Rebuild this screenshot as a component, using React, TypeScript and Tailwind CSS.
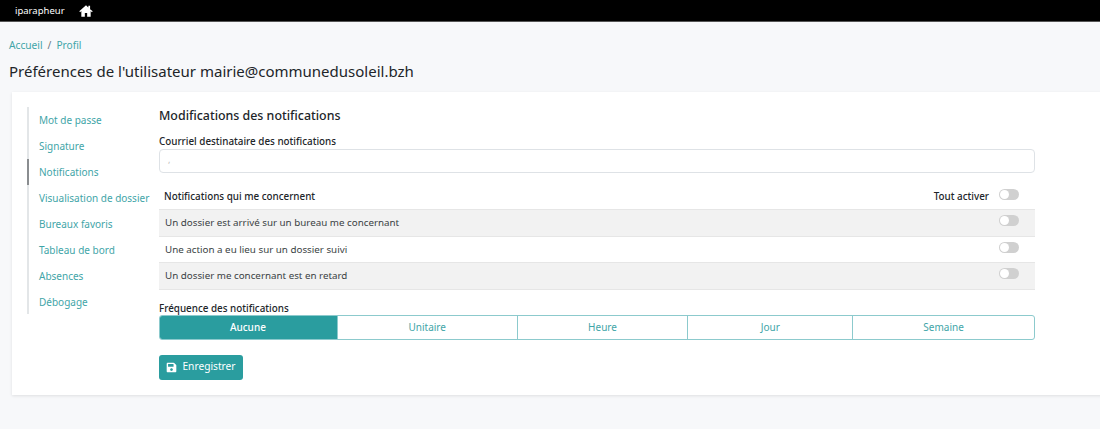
import { FaSave } from "react-icons/fa";

const font = { fontFamily: '"Noto Sans", sans-serif' };

const nav = ["Mot de passe", "Signature", "Notifications", "Visualisation de dossier", "Bureaux favoris", "Tableau de bord", "Absences", "Débogage"];
const rows = [
  { t: "Un dossier est arrivé sur un bureau me concernant", g: true },
  { t: "Une action a eu lieu sur un dossier suivi", g: false },
  { t: "Un dossier me concernant est en retard", g: true },
];
const segs = [
  { t: "Aucune", w: "w-[178px]", on: true },
  { t: "Unitaire", w: "w-[180px]", on: false },
  { t: "Heure", w: "w-[171px]", on: false },
  { t: "Jour", w: "w-[165px]", on: false },
  { t: "Semaine", w: "w-[182px]", on: false },
];

function Toggle() {
  return (
    <span className="flex h-[11px] w-[20px] items-center rounded-full bg-[#d0d0d0] pl-px">
      <span className="h-[9px] w-[9px] rounded-full bg-white" />
    </span>
  );
}

export default function App() {
  return (
    <div style={font} className="flex h-[429px] w-[1100px] flex-col overflow-hidden bg-[#f7f8fa] text-[#212529]">
      <header className="flex h-[22px] shrink-0 items-center border-b border-[#555] bg-black pl-[15px] text-white">
        <span className="text-[9.5px] leading-none">iparapheur</span>
        <svg viewBox="0 0 24 24" className="ml-[14px] h-[14px] w-[14px]" fill="currentColor">
          <path d="M12 2 0.5 12.5 2 14l2-1.8V22h6v-6.5h4V22h6v-9.8l2 1.8 1.5-1.5L19 9V3h-3v3.2z" />
        </svg>
      </header>
      <div className="flex h-[70px] shrink-0 flex-col pl-[9px]">
        <nav className="mt-[15px] flex h-[17px] items-center text-[10.2px] text-[#3fa5a8]">
          <span>Accueil</span>
          <span className="mx-[5px] text-[#6c757d]">/</span>
          <span>Profil</span>
        </nav>
        <h1 className="mt-[6px] text-[15px] leading-[22px] font-normal whitespace-nowrap text-[#212529]">
          Préférences de l'utilisateur mairie@communedusoleil.bzh
        </h1>
      </div>
      <main className="ml-3 flex h-[303px] w-[1100px] shrink-0 bg-white pt-[15px] pl-[15px] shadow-[0_1px_3px_rgba(0,0,0,0.1)]">
        <ul className="h-[207px] w-[132px] shrink-0 border-l-2 border-[#e3e6e8]">
          {nav.map((n) => (
            <li
              key={n}
              className={`-ml-[2px] flex h-[26px] items-center border-l-2 pl-[10px] text-[10px] whitespace-nowrap text-[#3fa5a8] ${n === "Notifications" ? "border-[#8a8d90]" : "border-transparent"}`}
            >
              {n}
            </li>
          ))}
        </ul>
        <section className="w-[876px] shrink-0">
          <h2 className="h-[17px] text-[12.4px] leading-[17px] font-medium">Modifications des notifications</h2>
          <label className="mt-[9px] block h-[16px] text-[9.85px] leading-[17px] font-medium">Courriel destinataire des notifications</label>
          <div className="h-[24px] rounded-[4px] border border-[#dee2e6] bg-white pl-[8px] text-[9px] leading-[20px] text-[#bbb]">,</div>
          <div className="mt-[13px] flex h-[24px] items-center justify-between border-b border-[#e6e6e6] pr-[16px] pl-[5px] text-[9.85px] font-medium">
            <span className="-mt-[3px]">Notifications qui me concernent</span>
            <span className="flex items-center gap-[10px]">
              <span className="-mt-[2px]">Tout activer</span>
              <span className="-mt-[5px]"><Toggle /></span>
            </span>
          </div>
          {rows.map((r) => (
            <div
              key={r.t}
              className={`flex h-[26.5px] items-center justify-between border-b border-[#e6e6e6] pr-[16px] pl-[6px] text-[9.8px] text-[#3a3f44] ${r.g ? "bg-[#f2f2f2]" : "bg-white"}`}
            >
              <span className="mt-[2px]">{r.t}</span>
              <span className="-mt-1"><Toggle /></span>
            </div>
          ))}
          <div className="mt-[11px] h-[14px] text-[9.85px] leading-[15px] font-medium">Fréquence des notifications</div>
          <div className="flex h-[25px] w-[876px] overflow-hidden rounded-[3px] border border-[#8ccacd]">
            {segs.map((s, i) => (
              <div
                key={s.t}
                className={`flex items-center justify-center text-[10px] ${s.w} ${i > 0 ? "border-l border-[#8ccacd]" : ""} ${s.on ? "-my-px -ml-px bg-[#2a9d9f] font-medium text-white" : "text-[#3fa5a8]"}`}
              >
                {s.t}
              </div>
            ))}
          </div>
          <button className="mt-[15px] flex h-[25px] w-[84px] items-center justify-center gap-[5px] rounded-[3px] bg-[#2a9d9f] text-[10.2px] text-white">
            <FaSave className="text-[11px]" />
            Enregistrer
          </button>
        </section>
      </main>
    </div>
  );
}
